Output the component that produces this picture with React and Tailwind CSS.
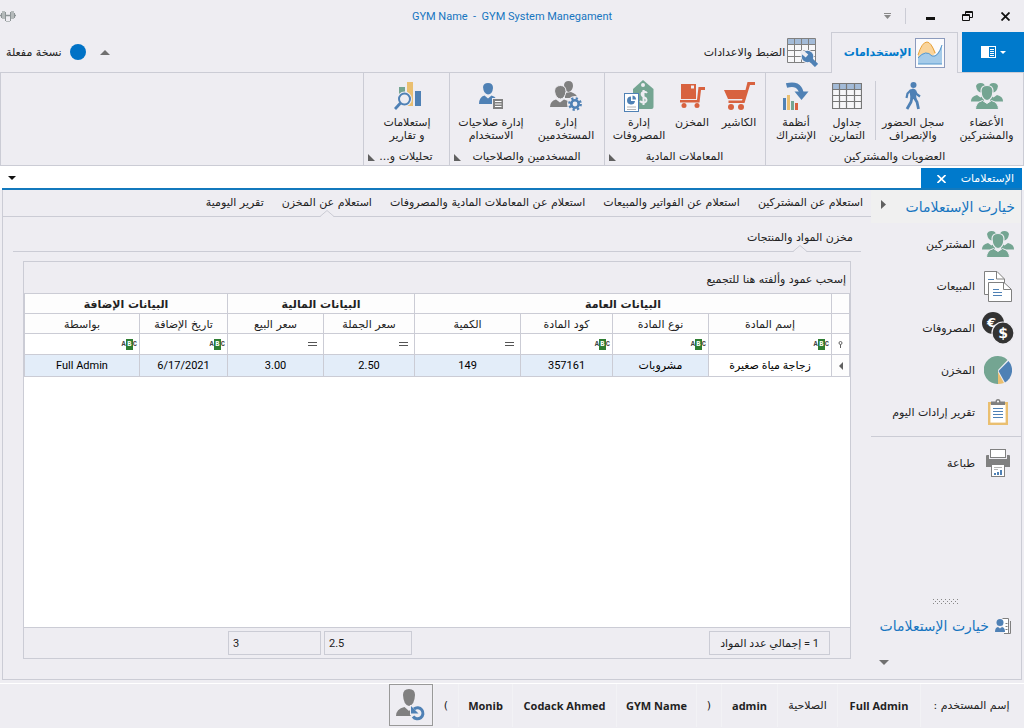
import React, { useState } from "react";

const PeopleIcon = () => (
  <svg width="32" height="26" viewBox="0 0 32 26" fill="#74a592" aria-hidden="true">
    <path d="M5 3Q6 0 9.500 0Q14 0 14 4Q13.500 9 10 9.500Q6 9 5 3Z" />
    <path d="M27 3Q26 0 22.500 0Q18 0 18 4Q18.500 9 22 9.500Q26 9 27 3Z" />
    <path d="M0 18Q0 13.500 6 12L9.500 14.500L13 12V18.500H0Z" />
    <path d="M32 18Q32 13.500 26 12L22.500 14.500L19 12V18.500H32Z" />
    <path
      d="M10 8Q10 2.500 16 2.500Q22 2.500 22 8Q21.500 17 16 17.500Q10.500 17 10 8Z"
      stroke="#eeedf2"
      strokeWidth="1.200"
    />
    <path
      d="M4.500 26.500Q4.500 19.500 11.500 17.500L16 20.500L20.500 17.500Q27.500 19.500 27.500 26.500Z"
      stroke="#eeedf2"
      strokeWidth="1"
    />
  </svg>
);

const WalkIcon = () => (
  <svg width="16" height="28" viewBox="0 0 16 28" fill="none" stroke="#4f81b5" aria-hidden="true">
    <circle cx="8.500" cy="3" r="3" fill="#4f81b5" stroke="none" />
    <path d="M4.500 8L8 6.500L10.500 7.500L11.500 17H5.500Z" fill="#4f81b5" stroke="none" />
    <path d="M6 8L2.500 11.500L1.500 16M10 8.500L11.500 12L15 14.500" strokeWidth="2.200" />
    <path d="M7 15.500L6 20L2 27M9.500 16L12 20L13.500 27" strokeWidth="2.800" />
  </svg>
);

const TableIcon = () => (
  <svg width="30" height="26" viewBox="0 0 30 26" aria-hidden="true">
    <rect x="0.500" y="0.500" width="29" height="25" fill="#f7f7f9" />
    <rect x="1" y="1" width="28" height="6" fill="#a3bbd8" />
    <path
      d="M0.500 0.500H29.500V25.500H0.500ZM0.500 6.500H29.500M0.500 12.500H29.500M0.500 18.500H29.500M7.500 0V25M14.500 0V25M22.500 0V25"
      fill="none"
      stroke="#777"
      strokeWidth="1.200"
    />
  </svg>
);

const PlansIcon = () => (
  <svg width="26" height="28" viewBox="0 0 26 28" aria-hidden="true">
    <path d="M0 16H3V28H0Z" fill="#4f81b5" />
    <path d="M4 13H7V28H4Z" fill="#eabf70" />
    <path d="M8 19H11V28H8Z" fill="#74a592" />
    <path d="M12 21H15V28H12Z" fill="#d8623f" />
    <path d="M3.500 3.500Q16 0 18.500 11" fill="none" stroke="#4f81b5" strokeWidth="4.500" />
    <path d="M11.500 9.500L25.500 9.500L18.500 18Z" fill="#4f81b5" />
  </svg>
);

const CartIcon = () => (
  <svg width="31" height="28" viewBox="0 0 31 28" fill="#d8623f" aria-hidden="true">
    <path d="M0 8H21.500L23.500 0H31V3H26L20.500 21H4.500V18.500H18L18.500 17H4Z" />
    <circle cx="7" cy="25" r="3" />
    <circle cx="17" cy="25" r="3" />
  </svg>
);

const StockIcon = () => (
  <svg width="25" height="24" viewBox="0 0 25 24" fill="#d8623f" aria-hidden="true">
    <path d="M1 0H16V15H1ZM11 1.500V4.500H14V1.500Z" fillRule="evenodd" />
    <path d="M0 16H17L18.500 3H25V6H21L19.500 18.500H0Z" />
    <circle cx="4" cy="21.500" r="2.500" />
    <circle cx="17" cy="21.500" r="2.500" />
  </svg>
);

const ExpensesIcon = () => (
  <svg width="30" height="32" viewBox="0 0 30 32" aria-hidden="true">
    <path d="M9 9L19 0L29.500 9V27Q29.500 29 27.500 29H9Z" fill="#74a592" />
    <circle cx="19" cy="5" r="2" fill="#eeedf2" />
    <path
      d="M23 13Q21.500 11 19 12Q16.500 13.500 18.500 16L22 18.500Q23.500 21.500 20.500 22.500Q18 23 16 21M19.500 10V25"
      fill="none"
      stroke="#eeedf2"
      strokeWidth="2"
    />
    <rect x="0.500" y="13.500" width="14" height="18" fill="#fff" stroke="#4f81b5" />
    <path d="M7 16.500A4 4 0 1 0 11 21H7Z" fill="#4f81b5" />
    <path d="M8.500 15.500A4 4 0 0 1 12 19.500H8.500Z" fill="#4f81b5" />
    <path d="M3 27H12M3 29.500H12" stroke="#b5b5b5" />
  </svg>
);

const UsersGearIcon = () => (
  <svg width="32" height="30" viewBox="0 0 32 30" fill="#808080" aria-hidden="true">
    <path d="M14 4Q14.500 0 18.500 0Q23 0 23 5Q22.500 10 18.500 11Q14.500 10 14 4Z" />
    <path d="M15 12L21 11Q27 13 27.500 17H15Z" />
    <path
      d="M4.500 10Q5 4.500 10.500 4.500Q16 4.500 16 10.500Q15 17.500 10.500 18Q5.500 17.500 4.500 10Z"
      stroke="#eeedf2"
    />
    <path d="M0 26Q0 20 6 18.500L10 21.500L14 18.500L18 20V26Z" />
    <circle cx="25" cy="23" r="8" fill="#eeedf2" />
    <circle cx="25" cy="23" r="3.700" fill="none" stroke="#4f81b5" strokeWidth="2.600" />
    <circle
      cx="25"
      cy="23"
      r="5.700"
      fill="none"
      stroke="#4f81b5"
      strokeWidth="2.400"
      strokeDasharray="2.200 2.280"
    />
  </svg>
);

const UserListIcon = () => (
  <svg width="25" height="27" viewBox="0 0 25 27" aria-hidden="true">
    <path d="M4 4Q4.500 0 9 0Q14 0 14 5Q13.500 11 9 11.500Q4.500 11 4 4Z" fill="#4f81b5" />
    <path d="M0 21Q0 14 5.500 12.500L9 15.500L12.500 12.500Q16 13.500 17 15.500V21Z" fill="#4f81b5" />
    <rect x="13.500" y="15.500" width="11" height="11" fill="#808080" stroke="#eeedf2" />
    <path d="M16 18.500H22.500M16 21H22.500M16 23.500H22.500" stroke="#fff" />
  </svg>
);

const ReportsIcon = () => (
  <svg width="27" height="28" viewBox="0 0 27 28" aria-hidden="true">
    <rect x="5" y="5" width="6" height="12" fill="#74a592" />
    <rect x="13" y="0" width="6" height="24" fill="#eabf70" />
    <rect x="21" y="9" width="6" height="15" fill="#4f81b5" />
    <circle cx="10.500" cy="17" r="7.500" fill="#eeedf2" />
    <circle cx="10.500" cy="17" r="5.500" fill="none" stroke="#4f81b5" strokeWidth="2" />
    <path d="M6.500 21L1 27" stroke="#4f81b5" strokeWidth="2.800" />
  </svg>
);

const AreaChartIcon = () => (
  <svg width="30" height="30" viewBox="0 0 30 30" aria-hidden="true">
    <rect x="0.500" y="0.500" width="29" height="29" fill="#fbfbfd" stroke="#8c9bbd" />
    <path d="M3 17Q7 4 12 4Q16 4 21 15L17 18Q13 15 11 15Q7 15 3 20Z" fill="#f9d49b" />
    <path d="M3 19Q11 11 17 18Q22 19 27 7V26H3Z" fill="#a5cbe9" />
    <path d="M3 20Q11 11 17 18Q23 20 27 7" fill="none" stroke="#5597cc" />
    <path d="M3 17Q7 4 12 4Q16 4 20 15" fill="none" stroke="#e8a33d" />
    <path d="M3 26H27" stroke="#5597cc" />
  </svg>
);

const TableWrenchIcon = () => (
  <svg width="31" height="29" viewBox="0 0 31 29" aria-hidden="true">
    <rect x="0.500" y="0.500" width="28" height="24" fill="#f7f7f9" />
    <rect x="1" y="1" width="27" height="5" fill="#a3bbd8" />
    <path
      d="M0.500 0.500H28.500V24.500H0.500ZM0.500 6.500H28.500M0.500 12.500H28.500M0.500 18.500H28.500M7.500 0V24M14.500 0V24M21.500 0V24"
      fill="none"
      stroke="#808080"
    />
    <circle cx="20.500" cy="18.500" r="6.800" fill="#eeedf2" />
    <circle cx="20.500" cy="18.500" r="5.800" fill="#4f81b5" />
    <path d="M21 19L29.500 27.500" stroke="#4f81b5" strokeWidth="4.500" />
    <path d="M14 13L20 18" stroke="#eeedf2" strokeWidth="4" />
  </svg>
);

const PagesIcon = () => (
  <svg width="28" height="31" viewBox="0 0 28 31" aria-hidden="true">
    <path d="M0.500 0.500H13L20.500 8V23.500H0.500Z" fill="#fff" stroke="#808080" />
    <path d="M12.500 0.500V8H20" fill="none" stroke="#808080" />
    <path d="M4 8.500H10" stroke="#4f81b5" />
    <path d="M4.500 11.500H20L27.500 18.500V30.500H4.500Z" fill="#fff" stroke="#808080" />
    <path d="M19.500 11.500V18.500H27" fill="none" stroke="#808080" />
    <path d="M9 18.500H15M9 21.500H18M9 24.500H18" stroke="#4f81b5" />
  </svg>
);

const CoinsIcon = () => (
  <svg width="32" height="32" viewBox="0 0 32 32" aria-hidden="true">
    <circle cx="11" cy="11" r="11" fill="#333" />
    <text x="9.500" y="15" fontSize="13" fontWeight="700" fill="#fff" textAnchor="middle">
      €
    </text>
    <circle cx="21" cy="21" r="11" fill="#333" stroke="#eeedf2" strokeWidth="1.200" />
    <text x="21" y="26" fontSize="14" fontWeight="700" fill="#fff" textAnchor="middle">
      $
    </text>
  </svg>
);

const PieIcon = () => (
  <svg width="28" height="28" viewBox="0 0 28 28" aria-hidden="true">
    <path d="M14 14V28A14 14 0 1 1 23.500 4Z" fill="#74a592" />
    <path d="M14.500 15L24.500 5A14 14 0 0 1 21 26.500Z" fill="#4f81b5" />
    <path d="M14 16L20 27Q17 28 14 28Z" fill="#eabf70" />
  </svg>
);

const ClipboardIcon = () => (
  <svg width="20" height="26" viewBox="0 0 20 26" aria-hidden="true">
    <rect x="1.200" y="4.200" width="17.600" height="20.600" fill="#fff" stroke="#eabf70" strokeWidth="2.400" />
    <path d="M3 2.500H7.500Q7.500 0 10 0Q12.500 0 12.500 2.500H17V6H3Z" fill="#808080" />
    <circle cx="10" cy="2.500" r="1" fill="#fff" />
    <path d="M5 9.500H15M5 12.500H15M5 15.500H15M5 18.500H15" stroke="#4f81b5" />
  </svg>
);

const PrinterIcon = () => (
  <svg width="24" height="28" viewBox="0 0 24 28" aria-hidden="true">
    <path d="M0 7Q0 6 1 6H3V10H21V6H23Q24 6 24 7V18H0Z" fill="#808080" />
    <rect x="4.500" y="0.500" width="15" height="8" fill="#fff" stroke="#808080" />
    <rect x="5.500" y="15.500" width="13" height="12" fill="#fff" stroke="#808080" />
    <path d="M8 18.500H16M8 20.500H12" stroke="#b5b5b5" />
    <path d="M8 24H10V26H8ZM11 23H13V26H11ZM14 21H16V26H14Z" fill="#4f81b5" />
  </svg>
);

const NavIcon = () => (
  <svg width="16" height="16" viewBox="0 0 16 16" aria-hidden="true">
    <path d="M7.500 0.500H13.500V15.500H9" fill="#fff" stroke="#808080" />
    <path d="M15.500 3V15.500H12" fill="none" stroke="#808080" />
    <path d="M10.500 5.500H12.500M10.500 8.500H12.500M10.500 11.500H12.500" stroke="#808080" />
    <circle cx="5" cy="4.500" r="3.500" fill="#4f81b5" />
    <path d="M0 14Q0 9.500 3 9L5 10.500L7 9Q10 9.500 10 14Z" fill="#4f81b5" />
  </svg>
);

const SwitchUserIcon = () => (
  <svg width="30" height="32" viewBox="0 0 30 32" aria-hidden="true">
    <path d="M7 6Q7 0 13 0Q19 0 19 6Q18.500 16 13 17Q7.500 16 7 6Z" fill="#808080" />
    <path d="M0 27Q0 20 8.500 18L13 22L17 18V27Z" fill="#808080" />
    <path d="M14 16V25.500L18 32H27V18Z" fill="#eeedf2" />
    <path d="M18 20A5.500 5.500 0 1 1 17 27.500" fill="none" stroke="#4f81b5" strokeWidth="3" />
    <path d="M15 17V24.500H22.500Z" fill="#4f81b5" />
  </svg>
);

const DumbbellIcon = () => (
  <svg width="16" height="12" viewBox="0 0 16 12" aria-hidden="true">
    <path d="M0 5.500H16" stroke="#8d9496" strokeWidth="1.500" />
    <path d="M3.500 1V9M12.500 1V9" stroke="#b5babb" strokeWidth="3" />
    <path d="M5.500 2V11M10.500 2V11M1.500 3V8M14.500 3V8" stroke="#8d9496" />
    <path d="M6 11.500H10" stroke="#b5babb" />
  </svg>
);

const Caret = ({ className = "", points = "0,0 10,0 5,5", w = 10, h = 5 }) => (
  <svg className={className} width={w} height={h} viewBox={`0 0 ${w} ${h}`} fill="currentColor" aria-hidden="true">
    <polygon points={points} />
  </svg>
);

// small notch that sits on the line under the selected tab
const Notch = () => (
  <svg
    className="absolute bottom-0 left-1/2 -translate-x-1/2"
    width="14"
    height="7"
    viewBox="0 0 14 7"
    aria-hidden="true"
  >
    <path d="M0 7L7 0L14 7Z" fill="#eeedf2" />
    <path d="M0 6.500L7 0.500L14 6.500" fill="none" stroke="#cbccd5" />
  </svg>
);

const ribbonGroups = [
  {
    title: "العضويات والمشتركين",
    width: "w-[258px]",
    items: [
      { lines: ["الأعضاء", "والمشتركين"], icon: <PeopleIcon />, width: "w-[73px]" },
      { lines: ["سجل الحضور", "والإنصراف"], icon: <WalkIcon />, width: "w-[74px]", divided: true },
      { lines: ["جداول", "التمارين"], icon: <TableIcon />, width: "w-[56px]" },
      { lines: ["أنظمة", "الإشتراك"], icon: <PlansIcon />, width: "w-[46px]" },
    ],
  },
  {
    title: "المعاملات المادية",
    width: "w-[161px]",
    launcher: true,
    items: [
      { lines: ["الكاشير"], icon: <CartIcon />, width: "w-[52px]" },
      { lines: ["المخزن"], icon: <StockIcon />, width: "w-[42px]" },
      { lines: ["إدارة", "المصروفات"], icon: <ExpensesIcon />, width: "w-[64px]" },
    ],
  },
  {
    title: "المسخدمين والصلاحيات",
    width: "w-[155px]",
    launcher: true,
    items: [
      { lines: ["إدارة", "المستخدمين"], icon: <UsersGearIcon />, width: "w-[76px]" },
      { lines: ["إدارة صلاحيات", "الاستخدام"], icon: <UserListIcon />, width: "w-[74px]" },
    ],
  },
  {
    title: "تحليلات و...",
    width: "w-[86px]",
    launcher: true,
    items: [{ lines: ["إستعلامات", "و تقارير"], icon: <ReportsIcon />, width: "w-[84px]" }],
  },
];

const queryTabs = [
  "استعلام عن المشتركين",
  "استعلام عن الفواتير والمبيعات",
  "استعلام عن المعاملات المادية والمصروفات",
  "استعلام عن المخزن",
  "تقرير اليومية",
];

const sideItems = [
  { label: "المشتركين", icon: <PeopleIcon /> },
  { label: "المبيعات", icon: <PagesIcon /> },
  { label: "المصروفات", icon: <CoinsIcon /> },
  { label: "المخزن", icon: <PieIcon /> },
  { label: "تقرير إرادات اليوم", icon: <ClipboardIcon /> },
];

const columns = [
  { label: "إسم المادة", filter: "abc", value: "زجاجة مياة صغيرة" },
  { label: "نوع المادة", filter: "abc", value: "مشروبات" },
  { label: "كود المادة", filter: "abc", value: "357161" },
  { label: "الكمية", filter: "eq", value: "149" },
  { label: "سعر الجملة", filter: "eq", value: "2.50" },
  { label: "سعر البيع", filter: "eq", value: "3.00" },
  { label: "تاريخ الإضافة", filter: "abc", value: "6/17/2021" },
  { label: "بواسطة", filter: "abc", value: "Full Admin" },
];

const statusItems = [
  { text: "إسم المستخدم :", width: "w-[102px]" },
  { text: "Full Admin", width: "w-[83px]", bold: true },
  { text: "الصلاحية", width: "w-[60px]" },
  { text: "admin", width: "w-[56px]", bold: true },
  { text: ")", width: "w-[25px]", dir: "ltr" },
  { text: "GYM Name", width: "w-[80px]", bold: true },
  { text: "Codack Ahmed", width: "w-[104px]", bold: true },
  { text: "Monib", width: "w-[54px]", bold: true },
  { text: "(", width: "w-[25px]", dir: "ltr" },
];

const RibbonButton = ({ item }) => (
  <>
    <button className={`flex shrink-0 flex-col items-center whitespace-nowrap ${item.width}`}>
      <span className="flex h-[38px] items-center justify-center">{item.icon}</span>
      <span className="mt-px flex flex-col text-center leading-[13px]">
        {item.lines.map((line) => (
          <span key={line}>{line}</span>
        ))}
      </span>
    </button>
    {item.divided && <span className="mt-1 h-[59px] w-px shrink-0 bg-[#cbccd5]" />}
  </>
);

const FilterMark = ({ type }) =>
  type === "abc" ? (
    <span
      dir="ltr"
      className="flex shrink-0 items-center font-['Liberation_Mono',monospace] text-[7px] leading-[11px] font-bold text-[#444]"
    >
      A<span className="w-[7px] bg-[#2f7d32] text-center text-white">B</span>C
    </span>
  ) : (
    <span className="mx-1 h-[4px] w-[9px] shrink-0 border-y border-[#555]" />
  );

const App = () => {
  const [activeTab, setActiveTab] = useState(queryTabs[3]);
  const [filters, setFilters] = useState({});

  return (
    <div
      dir="rtl"
      className="flex min-h-screen flex-col bg-[#eeedf2] font-['DejaVu_Sans',sans-serif] text-[11px] leading-4 text-[#222]"
    >
      <header className="grid h-8 grid-cols-[1fr_auto_1fr] items-center">
        <div className="flex items-center">
          <button aria-label="إغلاق" className="flex w-[38px] justify-center">
            <svg width="9" height="9" viewBox="0 0 9 9" stroke="#111" strokeWidth="1.800">
              <path d="M0.500 0.500L8.500 8.500M8.500 0.500L0.500 8.500" />
            </svg>
          </button>
          <button aria-label="استعادة" className="flex w-[38px] justify-center">
            <svg width="11" height="10" viewBox="0 0 11 10" fill="none" stroke="#111">
              <path d="M3.500 3V0.500H10.500V6.500H8M3.500 1.500H10.500M0.500 3.500H7.500V9.500H0.500ZM0.500 4.500H7.500" />
            </svg>
          </button>
          <button aria-label="تصغير" className="flex w-[36px] justify-center">
            <span className="mt-1 h-[3px] w-[9px] bg-[#111]" />
          </button>
          <span className="mr-1.5 ml-1 h-4 w-px bg-[#cbccd5]" />
          <button aria-label="تخصيص" className="flex w-[28px] flex-col items-center text-[#888]">
            <span className="mb-px h-px w-[7px] bg-[#888]" />
            <Caret w={7} h={4} points="0,0 7,0 3.5,4" />
          </button>
        </div>
        <h1 dir="ltr" className="pt-0.5 font-[Roboto,sans-serif] whitespace-pre text-[#1675c0]">
          GYM Name  -  GYM System Manegament
        </h1>
        <div className="flex justify-end">
          <DumbbellIcon />
        </div>
      </header>

      <nav className="flex h-[41px] items-stretch border-b border-[#cbccd5]">
        <button aria-label="القائمة" className="flex w-[62px] items-center justify-center gap-1 bg-[#007acc] text-white">
          <Caret w={6} h={3} points="0,0 6,0 3,3" />
          <svg width="15" height="12" viewBox="0 0 15 12" aria-hidden="true">
            <rect x="0.500" y="0.500" width="14" height="11" fill="none" stroke="#fff" />
            <path d="M0 0H8V12H0Z" fill="#fff" />
            <path d="M9 3.500H13M9 5.500H13M9 7.500H13M9 9.500H13" stroke="#fff" />
          </svg>
        </button>
        <button className="-mb-px mr-1 flex w-[127px] items-center justify-center gap-1 border-x border-t border-[#cbccd5] bg-[#eeedf2] font-bold whitespace-nowrap text-[#007acc]">
          <AreaChartIcon />
          الإستخدامات
        </button>
        <button className="flex w-[140px] items-center justify-center gap-0.5 whitespace-nowrap">
          <TableWrenchIcon />
          <span className="pt-0.5">الضبط والاعدادات</span>
        </button>
        <div className="mr-auto flex items-center pl-1.5">
          <button aria-label="طي الشريط" className="ml-3.5 text-[#707070]">
            <Caret w={10} h={5} points="0,5 5,0 10,5" />
          </button>
          <span className="ml-2 size-4 rounded-full bg-[#0072c6]" />
          <span className="pt-0.5 whitespace-nowrap">نسخة مفعلة</span>
        </div>
      </nav>

      <section className="flex h-[93px] border-x border-b border-[#cbccd5]">
        {ribbonGroups.map((group) => (
          <div
            key={group.title}
            className={`flex shrink-0 flex-col border-l border-[#cbccd5] pt-1 ${group.width}`}
          >
            <div className="flex flex-1 justify-start">
              {group.items.map((item) => (
                <RibbonButton key={item.lines[0] + item.lines.length} item={item} />
              ))}
            </div>
            <div className={`flex items-center ${group.launcher ? "pr-3 pl-1" : "px-1"}`}>
              <span className="flex-1 text-center whitespace-nowrap">{group.title}</span>
              {group.launcher && (
                <button aria-label="المزيد" className="text-[#606060]">
                  <Caret w={7} h={7} points="0,0 7,7 0,7" />
                </button>
              )}
            </div>
          </div>
        ))}
      </section>

      <div className="bg-white px-0.5 pt-0.5">
        <div className="flex items-center border-b-2 border-[#1379bd]">
          <div className="flex h-5 w-[101px] items-center justify-between bg-[#007acc] pt-0.5 pr-2 pl-4 text-white">
            <span>الإستعلامات</span>
            <button aria-label="إغلاق التبويب">
              <svg width="9" height="8" viewBox="0 0 9 8" stroke="#fff" strokeWidth="1.600">
                <path d="M0.500 0L8.500 8M8.500 0L0.500 8" />
              </svg>
            </button>
          </div>
          <button aria-label="قائمة التبويبات" className="mr-auto ml-1.5 text-[#111]">
            <Caret w={8} h={4} points="0,0 8,0 4,4" />
          </button>
        </div>
      </div>

      <main className="mx-0.5 flex flex-1 border-x border-b border-[#cbccd5]">
        <aside className="flex w-[150px] shrink-0 flex-col">
          <div className="flex h-[33px] items-center justify-between bg-[#f0f0f0] pr-1.5">
            <h2 className="text-[14px] leading-5 whitespace-nowrap text-[#1675c0]">خيارت الإستعلامات</h2>
            <button aria-label="طي القائمة" className="ml-2.5 pb-1 text-[#606060]">
              <Caret w={5} h={9} points="0,0 5,4.5 0,9" />
            </button>
          </div>
          {sideItems.map((item) => (
            <button key={item.label} className="flex h-[42px] items-center gap-[7px] pr-[7px] whitespace-nowrap">
              <span className="flex w-8 justify-center">{item.icon}</span>
              <span className="pt-0.5">{item.label}</span>
            </button>
          ))}
          <button className="mt-[3px] flex h-[52px] items-center gap-[7px] border-t border-[#cbccd5] pr-[7px]">
            <span className="flex w-8 justify-center">
              <PrinterIcon />
            </span>
            <span className="pt-0.5">طباعة</span>
          </button>
          <div className="mt-auto flex justify-center">
            <svg width="26" height="5" viewBox="0 0 26 5" stroke="#888" strokeDasharray="1 3" aria-hidden="true">
              <path d="M0 0.500H26M2 2.500H26M0 4.500H26" />
            </svg>
          </div>
          <button className="mt-2 flex h-7 items-center gap-1.5 pr-2.5 text-[14px] whitespace-nowrap text-[#1675c0]">
            <NavIcon />
            خيارت الإستعلامات
          </button>
          <button aria-label="المزيد من الخيارات" className="mt-5 mb-3.5 ml-2 self-end text-[#707070]">
            <Caret w={10} h={5} />
          </button>
        </aside>

        <div className="flex min-w-0 flex-1 flex-col">
          <div role="tablist" className="flex h-[27px] items-stretch gap-[18px] border-b border-[#cbccd5] pr-2">
            {queryTabs.map((tab) => (
              <button
                key={tab}
                role="tab"
                aria-selected={tab === activeTab}
                onClick={() => setActiveTab(tab)}
                className="relative -mb-px pb-0.5 whitespace-nowrap"
              >
                {tab}
                {tab === activeTab && <Notch />}
              </button>
            ))}
          </div>

          <div role="tablist" className="mx-2.5 flex h-[35px] items-stretch border-b border-[#cbccd5] pt-1.5 pr-2">
            <button role="tab" aria-selected="true" className="relative -mb-px whitespace-nowrap">
              مخزن المواد والمنتجات
              <Notch />
            </button>
          </div>

          <div className="mx-5 mt-[9px] mb-5 flex flex-1 flex-col border border-[#cbccd5] bg-white">
            <div className="flex h-[31px] items-center bg-[#eeedf2] pt-1 pr-1">إسحب عمود وألفته هنا للتجميع</div>

            <table className="w-full table-fixed border-collapse text-center [&_td]:border [&_td]:border-[#cbccd5] [&_td]:p-0 [&_th]:border [&_th]:border-[#cbccd5] [&_th]:bg-[#fdfdfd] [&_th]:px-0 [&_th]:pt-0.5 [&_th]:pb-0">
              <colgroup>
                <col className="w-[18px]" />
                <col />
                <col className="w-[96px]" />
                <col className="w-[92px]" />
                <col className="w-[106px]" />
                <col className="w-[91px]" />
                <col className="w-[96px]" />
                <col className="w-[88px]" />
                <col className="w-[115px]" />
              </colgroup>
              <thead>
                <tr className="h-5 font-bold">
                  <th />
                  <th colSpan={4}>البيانات العامة</th>
                  <th colSpan={2}>البيانات المالية</th>
                  <th colSpan={2}>البيانات الإضافة</th>
                </tr>
                <tr className="h-5">
                  <th />
                  {columns.map((col) => (
                    <th key={col.label} className="font-normal">
                      {col.label}
                    </th>
                  ))}
                </tr>
              </thead>
              <tbody>
                <tr className="h-[21px] bg-white">
                  <td>
                    <svg className="mx-auto" width="5" height="7" viewBox="0 0 5 7" fill="none" stroke="#606060" aria-hidden="true">
                      <circle cx="2.500" cy="2" r="1.500" />
                      <path d="M2.500 3.500V7" />
                    </svg>
                  </td>
                  {columns.map((col) => (
                    <td key={col.label}>
                      <label className="flex h-5 items-center pr-0.5">
                        <FilterMark type={col.filter} />
                        <input
                          type="text"
                          aria-label={col.label}
                          value={filters[col.label] || ""}
                          onChange={(e) => setFilters({ ...filters, [col.label]: e.target.value })}
                          className="min-w-0 flex-1 bg-transparent px-1 outline-none"
                        />
                      </label>
                    </td>
                  ))}
                </tr>
                <tr className="h-[22px] bg-[#e3edf9] font-[Roboto,'DejaVu_Sans',sans-serif] text-black">
                  <td className="bg-[#fdfdfd] text-[#606060]">
                    <Caret className="mx-auto" w={4} h={8} points="4,0 0,4 4,8" />
                  </td>
                  {columns.map((col, i) => (
                    <td key={col.label} className={i === 0 ? "bg-white" : ""}>
                      <span className="block pt-px">{col.value}</span>
                    </td>
                  ))}
                </tr>
              </tbody>
            </table>

            <div className="mt-auto grid h-[31px] grid-cols-[18px_minmax(0,1fr)_96px_92px_106px_91px_96px_88px_115px] items-center border-t border-[#cbccd5] bg-[#eeedf2] font-[Roboto,'DejaVu_Sans',sans-serif]">
              <span className="col-start-2 mr-0.5 ml-px flex h-6 items-center border border-[#cbccd5] pt-0.5 pr-2.5 whitespace-nowrap">
                1 = إجمالي عدد المواد
              </span>
              <span className="col-start-6 mr-0.5 ml-px flex h-6 items-center justify-end border border-[#cbccd5] pt-0.5 pl-1">
                2.5
              </span>
              <span className="col-start-7 mr-0.5 ml-px flex h-6 items-center justify-end border border-[#cbccd5] pt-0.5 pl-1">
                3
              </span>
            </div>
          </div>
        </div>
      </main>

      <footer className="mt-[3px] flex h-[45px] items-start border-t border-white pr-0.5">
        {statusItems.map((item) => (
          <span
            key={item.text}
            dir={item.dir}
            className={`flex h-[43px] shrink-0 items-center justify-center border-l border-[#f2f2f5] whitespace-nowrap ${item.width} ${item.bold ? "font-['Open_Sans',sans-serif] font-bold" : ""}`}
          >
            {item.text}
          </span>
        ))}
        <button
          aria-label="تبديل المستخدم"
          className="flex h-[42px] w-11 items-center justify-center border border-[#999]"
        >
          <SwitchUserIcon />
        </button>
      </footer>
    </div>
  );
};

export default App;
